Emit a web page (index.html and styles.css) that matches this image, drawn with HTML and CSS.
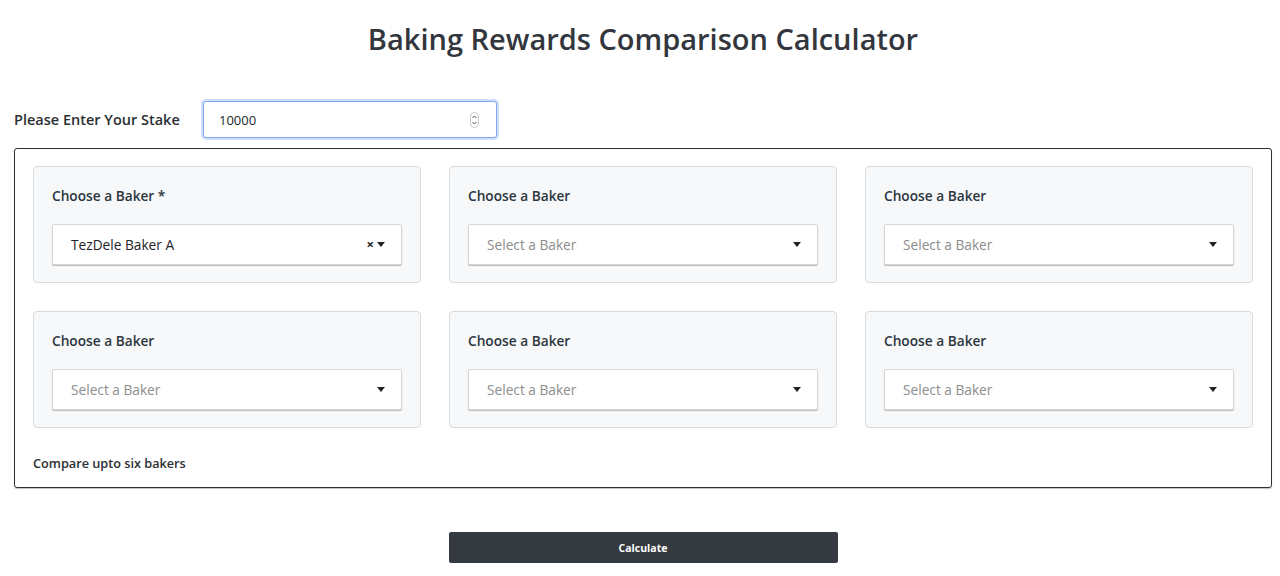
FILE: index.html
```html
<!DOCTYPE html>
<html>
<head>
  <meta charset="utf-8">
  <meta name="viewport" content="width=device-width, initial-scale=1">
  <title>Baking Rewards Comparison Calculator</title>
  <link rel="stylesheet" href="styles.css">
</head>
<body>

<div class="page">

  <h1 class="title">Baking Rewards Comparison Calculator</h1>

  <div class="stake-row">
    <label class="stake-label" for="stake">Please Enter Your Stake</label>
    <div class="stake-field">
      <input type="text" id="stake" value="10000">
      <svg class="spinner" width="9" height="16" viewBox="0 0 9 16">
        <rect x="0.5" y="0.5" width="8" height="15" rx="4" fill="#fff" stroke="#c8c8c8"/>
        <path d="M2.5 6 L4.5 4 L6.5 6" fill="none" stroke="#555" stroke-width="1"/>
        <path d="M2.5 10 L4.5 12 L6.5 10" fill="none" stroke="#555" stroke-width="1"/>
      </svg>
    </div>
  </div>

  <div class="bakers-box">
    <div class="bakers-grid">

      <div class="baker-card">
        <div class="baker-label">Choose a Baker *</div>
        <div class="baker-select">
          <span class="value">TezDele Baker A</span>
          <span class="controls"><span class="clear">&times;</span><span class="caret"></span></span>
        </div>
      </div>

      <div class="baker-card">
        <div class="baker-label">Choose a Baker</div>
        <div class="baker-select">
          <span class="placeholder">Select a Baker</span>
          <span class="controls"><span class="caret"></span></span>
        </div>
      </div>

      <div class="baker-card">
        <div class="baker-label">Choose a Baker</div>
        <div class="baker-select">
          <span class="placeholder">Select a Baker</span>
          <span class="controls"><span class="caret"></span></span>
        </div>
      </div>

      <div class="baker-card">
        <div class="baker-label">Choose a Baker</div>
        <div class="baker-select">
          <span class="placeholder">Select a Baker</span>
          <span class="controls"><span class="caret"></span></span>
        </div>
      </div>

      <div class="baker-card">
        <div class="baker-label">Choose a Baker</div>
        <div class="baker-select">
          <span class="placeholder">Select a Baker</span>
          <span class="controls"><span class="caret"></span></span>
        </div>
      </div>

      <div class="baker-card">
        <div class="baker-label">Choose a Baker</div>
        <div class="baker-select">
          <span class="placeholder">Select a Baker</span>
          <span class="controls"><span class="caret"></span></span>
        </div>
      </div>

    </div>

    <div class="hint">Compare upto six bakers</div>
  </div>

  <div class="actions">
    <button type="button" class="calc-btn">Calculate</button>
  </div>

</div>

</body>
</html>
```

FILE: styles.css
```css
body {
  margin: 0;
  font-family: "Open Sans", "Noto Sans", sans-serif;
  color: #343a40;
  background: #fff;
}

.page {
  width: 1258px;
  margin-left: 14px;
}

.title {
  margin: 0;
  padding-top: 18px;
  height: 42px;
  line-height: 42px;
  text-align: center;
  font-size: 29px;
  font-weight: 600;
  color: #33373d;
}

.stake-row {
  display: flex;
  align-items: center;
  margin-top: 41px;
  height: 37px;
}

.stake-label {
  font-size: 14.5px;
  font-weight: 600;
  color: #2b2f33;
  width: 189px;
}

.stake-field {
  position: relative;
  width: 294px;
  height: 37px;
  box-sizing: border-box;
}

.stake-field input {
  width: 100%;
  height: 100%;
  box-sizing: border-box;
  border: 1px solid #7fa8f0;
  border-radius: 3px;
  box-shadow: 0 0 0 2px rgba(120, 160, 240, 0.35);
  padding: 0 0 0 15px;
  font-family: inherit;
  font-size: 13px;
  color: #212529;
  outline: none;
}

.spinner {
  position: absolute;
  right: 18px;
  top: 11px;
}

.bakers-box {
  margin-top: 10px;
  border: 1px solid #2f2f2f;
  border-radius: 3px;
  box-shadow: 0 1px 1px rgba(0, 0, 0, 0.25);
  padding: 17px 18px 14px 18px;
}

.bakers-grid {
  display: grid;
  grid-template-columns: repeat(3, 388px);
  column-gap: 28px;
  row-gap: 28px;
}

.baker-card {
  background: #f7f8f9;
  border: 1px solid #d9dcdf;
  border-radius: 4px;
  padding: 19px 18px 17px 18px;
  height: 117px;
  box-sizing: border-box;
}

.baker-label {
  font-size: 13.7px;
  font-weight: 600;
  line-height: 20px;
  color: #2c3640;
}

.baker-select {
  margin-top: 18px;
  height: 41px;
  box-sizing: border-box;
  background: #fff;
  border: 1px solid #d6d6d6;
  border-radius: 2px;
  box-shadow: 0 1px 1px rgba(0, 0, 0, 0.25);
  display: flex;
  align-items: center;
  justify-content: space-between;
  padding: 0 18px 0 18px;
  font-size: 13.7px;
}

.baker-select .value {
  color: #1e2226;
}

.baker-select .placeholder {
  color: #8c8c8c;
}

.controls {
  display: flex;
  align-items: center;
  gap: 3px;
}

.clear {
  font-size: 13px;
  font-weight: 700;
  color: #222;
  line-height: 1;
}

.caret {
  width: 0;
  height: 0;
  border-left: 4px solid transparent;
  border-right: 4px solid transparent;
  border-top: 5px solid #222;
  margin-right: -2px;
}

.hint {
  margin-top: 25px;
  font-size: 12.7px;
  font-weight: 600;
  line-height: 20px;
  color: #2b2f33;
}

.actions {
  display: flex;
  justify-content: center;
  margin-top: 44px;
}

.calc-btn {
  width: 389px;
  height: 31px;
  background: #343a40;
  color: #fff;
  border: 0;
  border-radius: 2px;
  font-family: inherit;
  font-size: 10.5px;
  font-weight: 700;
}
```
